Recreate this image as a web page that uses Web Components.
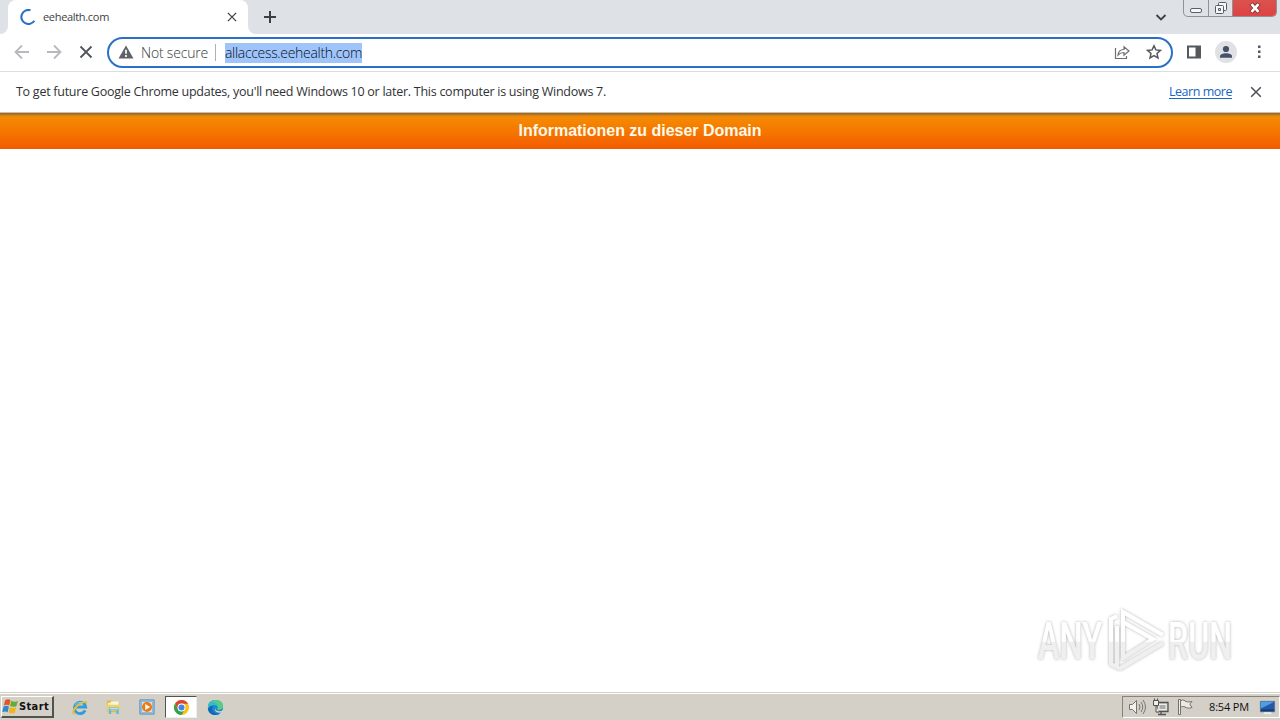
<!DOCTYPE html>
<html lang="en">
<head>
<meta charset="utf-8">
<title>eehealth.com</title>
<style>
  body { margin: 0; width: 1280px; height: 720px; overflow: hidden; background: white; font-family: "Open Sans", "Noto Sans", sans-serif; }
</style>
</head>
<body>
<desktop-screen></desktop-screen>
<script>
// Text with tracking adjusted so it takes up exactly the given width
class FitText extends HTMLElement {
  constructor() {
    super();
    this.attachShadow({ mode: 'open' });
    this.shadowRoot.innerHTML = `
      <style>
        :host { display: block; flex: none; white-space: nowrap; }
        span { display: inline-block; text-decoration: inherit; text-underline-offset: inherit; }
      </style>
      <span><slot></slot></span>
    `;
  }

  connectedCallback() {
    const width = Number(this.getAttribute('width'));
    const span = this.shadowRoot.querySelector('span');
    this.style.width = `${width}px`;
    const length = this.textContent.length;
    span.style.letterSpacing = `${(width - span.getBoundingClientRect().width) / length}px`;
  }
}
customElements.define('fit-text', FitText);

class UiIcon extends HTMLElement {
  static shapes = {
    spinner: ['0 0 16 16', '<path d="M10.500 1.300A7 7 0 1 0 14.300 11.700" fill="none" stroke="#2a6fc9" stroke-width="2.100"/>'],
    close: ['0 0 16 16', '<path d="M2.500 2.500l11 11M13.500 2.500l-11 11" fill="none" stroke="currentColor" stroke-width="1.800"/>'],
    plus: ['0 0 16 16', '<path d="M8 2v12M2 8h12" fill="none" stroke="currentColor" stroke-width="2"/>'],
    chevron: ['0 0 16 16', '<path d="M3.500 6L8 10.500 12.500 6" fill="none" stroke="currentColor" stroke-width="1.800"/>'],
    back: ['0 0 16 16', '<path d="M15 8H2M8 1.500L1.500 8 8 14.500" fill="none" stroke="currentColor" stroke-width="1.800"/>'],
    forward: ['0 0 16 16', '<path d="M1 8h13M8 1.500L14.500 8 8 14.500" fill="none" stroke="currentColor" stroke-width="1.800"/>'],
    warning: ['0 0 16 16', '<path d="M8 1.500L15.500 14.500H.5z" fill="#5f6368"/><path d="M8 5.800v4M8 11v2" stroke="white" stroke-width="1.700"/>'],
    share: ['0 0 16 16', '<path d="M1.500 4v10.500h11V12M4 11c.4-3.700 2.600-5.500 6-5.500V2.700L15 7l-5 4.300V8.500C7.300 8.500 5.600 9.200 4 11z" fill="none" stroke="#6b6f73" stroke-width="1.200"/>'],
    star: ['0 0 16 16', '<path d="M8 1.800l1.900 4.100 4.500.5-3.400 3 1 4.500L8 11.600l-4 2.300 1-4.500-3.400-3 4.500-.5z" fill="none" stroke="#55595e" stroke-width="1.500"/>'],
    panel: ['0 0 16 16', '<path d="M2 2.500h12v11H2z" fill="none" stroke="#55595e" stroke-width="2"/><path d="M9.500 2H14v12H9.500z" fill="#55595e"/>'],
    avatar: ['0 0 22 22', '<circle cx="11" cy="11" r="11" fill="#dfe1e5"/><circle cx="11" cy="8" r="3.100" fill="#435069"/><path d="M5 16.800v-1.600c0-4 12-4 12 0v1.600z" fill="#435069"/>'],
    menu: ['0 0 16 16', '<path d="M7 1.500h2.500V4H7zM7 6.500h2.500V9H7zM7 11.500h2.500V14H7z" fill="#55595e"/>'],
    minimize: ['0 0 16 16', '<rect x="2.500" y="8.500" width="11" height="4" rx="1.500" fill="#f6f7f8" stroke="#5b6068"/>'],
    restore: ['0 0 16 16', '<rect x="5.500" y="2.500" width="8" height="8" rx="1" fill="#f6f7f8" stroke="#555c66"/><rect x="2.500" y="5.500" width="8" height="8" rx="1" fill="#f6f7f8" stroke="#555c66"/><path d="M5.500 8.500h2v2h-2z" fill="#dee1e6" stroke="#555c66"/>'],
    shut: ['0 0 16 16', '<path d="M3.500 3l9 10M12.500 3l-9 10" stroke="#7f3033" stroke-width="5"/><path d="M4 3.500l8 9M12 3.500l-8 9" stroke="white" stroke-width="3"/>'],
    windows: ['0 0 16 16', '<path d="M3 2q3-1.700 5 .2L6.800 7.100q-2-1.500-5-.2z" fill="#e65422"/><path d="M8.700 2.700q2.700 1.600 6.300.2l-1.500 4.800q-3.300 1.200-5.900-.2z" fill="#65ad32"/><path d="M1.500 8q3-1.300 5 .2l-1.200 5.200q-2-1.500-5-.2z" fill="#2988d0"/><path d="M7.400 8.600q2.600 1.400 5.800.3L12 14q-3.100 1-5.700-.3z" fill="#f2b511"/>'],
    ie: ['0 0 18 18', '<path d="M15 12a6 6 0 1 1 .5-3.500H5" fill="none" stroke="#319bdc" stroke-width="3"/><path d="M2 16C-1 13 6 3 15 2c3 0 2.300 2.500 1 4.500.7-2.500-.5-3-3-2C7.500 6.800 3 12 3.500 14.500c.2 1.500 2 1 3.500 0-2 2-4 2.500-5 1.500z" fill="#e9bd32"/><path d="M4.500 6.500c2-3 5-3.500 7.500-2.500" fill="none" stroke="#8ed2f6"/>'],
    folder: ['0 0 18 18', '<path d="M2 3l1-1.500h5L9 3h6v11H2z" fill="#dfb849"/><path d="M3 4h11v8H3z" fill="#fff0a8"/><path d="M6 2.500h8.500v4H6z" fill="#f9f7d3"/><path d="M2 6h14l-1 10h-3v-4H6v4H3z" fill="#edd36f"/><path d="M4 9h10.500v7H12v-4H6.500v4H4z" fill="#66b6de"/><path d="M5 9.500h9V11H5z" fill="#b4e2f3"/>'],
    player: ['0 0 18 18', '<path d="M1 1h16v16H1z" fill="#a1c9e8" stroke="#4d88b7"/><path d="M3 3h12v12H3z" fill="#e5f1f8" stroke="#81afd2"/><circle cx="9" cy="9" r="5.700" fill="#f07914"/><path d="M7 5.500v7L12.500 9z" fill="white"/>'],
    chrome: ['0 0 18 18', '<circle cx="9" cy="9" r="8" fill="#fbc116"/><path d="M2.100 5A8 8 0 0 1 16 5H9a4 4 0 0 0-3.500 6z" fill="#dd4337"/><path d="M2.100 5A8 8 0 0 0 9 17l3.500-6A4 4 0 0 1 5.500 11z" fill="#30a254"/><circle cx="9" cy="9" r="4.200" fill="white"/><circle cx="9" cy="9" r="3.200" fill="#4285e8"/>'],
    edge: ['0 0 18 18', '<circle cx="9" cy="9" r="8" fill="#1689ce"/><path d="M1 8C1-1 17-1 17 7.500c0 4-4.500 4.500-6.200 3.300 1.600-2 .5-4.300-2.500-4.300C4.500 6.500 1 9 1 12z" fill="#36bbc5"/><path d="M9 1c5 0 8 3 8 6.500 0 4-4.500 4.500-6.200 3.300 2-2.700 0-7.300-5.800-7.800Q7 1 9 1z" fill="#58cb87"/><path d="M6.500 7c-3 5 1 10 7.500 8.200C9 19 1 16.500 1 10q2-3 5.500-3z" fill="#1466b6"/><path d="M9 8.500c-1.500 3 2 5.500 7 4l2-1v4l-3-1.200c-5 1.300-8-2.300-6-5.800z" fill="#d4d0c8"/>'],
    volume: ['0 0 18 18', '<path d="M1.500 6.500h3l4-4v13l-4-4h-3z" fill="#f2f1ee" stroke="#74736f"/><path d="M11 6q2 3 0 6M13 4q3.500 5 0 10M15 2q5 7 0 14" fill="none" stroke="#777570"/>'],
    network: ['0 0 18 18', '<path d="M5 4.500h11v9H5zM9 14v2M6 16.500h8" fill="#d0d0cc" stroke="#55534f" stroke-width="1.300"/><path d="M7 6.500h7v5H7z" fill="#aaa" stroke="#eee"/><path d="M1.500 2.500h5v5h-5zM2.500.5v2M5.500.5v2M4 8v6h3" fill="#f0eeea" stroke="#55534f"/>'],
    flag: ['0 0 18 18', '<path d="M2.500 1.500v15h2v-15z" fill="#eee" stroke="#74716d"/><path d="M4.500 2.500c3-1 4 0 5.500 1 2 .8 4 .3 6 0-1 1-2 2-2 3l2 3c-2.500 1-5 .8-7-.5-1.500-.8-3-.5-4.500 0z" fill="#edeae5" stroke="#74716d"/>'],
    desktop: ['0 0 18 16', '<path d="M1.500 1.500h15v11h-15z" fill="#2459a9" stroke="#557495"/><path d="M2 2h14L2 9z" fill="#4f9de5"/><path d="M2 10h14v2H2z" fill="#183a70"/><path d="M5 14h8" stroke="#ededeb" stroke-width="2"/>']
  };

  constructor() {
    super();
    this.attachShadow({ mode: 'open' });
  }

  connectedCallback() {
    const [viewBox, shape] = UiIcon.shapes[this.getAttribute('name')];
    const size = this.getAttribute('size') ?? 16;
    this.shadowRoot.innerHTML = `
      <style>
        :host { display: block; flex: none; width: ${size}px; height: ${size}px; }
        svg { display: block; }
      </style>
      <svg width="${size}" height="${size}" viewBox="${viewBox}">${shape}</svg>
    `;
  }
}
customElements.define('ui-icon', UiIcon);

class BrowserTabs extends HTMLElement {
  constructor() {
    super();
    this.attachShadow({ mode: 'open' });
    this.shadowRoot.innerHTML = `
      <style>
        :host { display: flex; height: 34px; background: #dee1e6; color: #3c4043; }
        .edge { width: 8px; background: white; }
        .edge::before { content: ""; display: block; height: 34px; background: #dee1e6; border-radius: 0 0 8px 0; }
        .edge.right::before { border-radius: 0 0 0 8px; }
        .tab { box-sizing: border-box; width: 240px; display: flex; align-items: center; padding: 0 10px 0 12px; background: white; border-radius: 8px 8px 0 0; }
        .tab fit-text { margin-left: 7px; font-size: 11px; line-height: 20px; }
        .tab .close { margin-left: auto; color: #43474b; }
        .plus { margin: 9px 0 0 6px; }
        .chevron { margin: 9px 14px 0 auto; }
        .controls { display: flex; height: 17px; box-sizing: border-box; width: 94px; border: 1px solid #8e9299; border-top: 0; border-radius: 0 0 5px 5px; margin-right: 3px; overflow: hidden; }
        .controls div { display: flex; justify-content: center; align-items: center; border-right: 1px solid #8e9299; width: 24px; }
        .controls .shut { width: 43px; background: linear-gradient(#d9534f, #df4242); border-right: 0; }
      </style>
      <div class="edge"></div>
      <div class="tab"><ui-icon name="spinner"></ui-icon><fit-text width="66">eehealth.com</fit-text><ui-icon class="close" name="close" size="12"></ui-icon></div>
      <div class="edge right"></div>
      <ui-icon class="plus" name="plus"></ui-icon>
      <ui-icon class="chevron" name="chevron"></ui-icon>
      <div class="controls">
        <div><ui-icon name="minimize"></ui-icon></div><div><ui-icon name="restore"></ui-icon></div><div class="shut"><ui-icon name="shut" size="14"></ui-icon></div>
      </div>
    `;
  }
}
customElements.define('browser-tabs', BrowserTabs);

class BrowserToolbar extends HTMLElement {
  constructor() {
    super();
    this.attachShadow({ mode: 'open' });
    this.shadowRoot.innerHTML = `
      <style>
        :host { display: flex; box-sizing: border-box; height: 38px; align-items: center; padding: 0 14px; border-bottom: 1px solid #dcdde0; background: white; }
        .navigation { display: flex; gap: 16px; color: #b7b9bc; width: 93px; margin-top: -1px; }
        .navigation ui-icon:last-child { color: #505459; }
        .address { box-sizing: border-box; display: flex; align-items: center; width: 1066px; height: 31px; border: 2px solid #2a6fc9; border-radius: 16px; padding: 0 9px; font-size: 14px; font-weight: 300; line-height: 20px; }
        .address > ui-icon, .actions ui-icon { margin-top: -1px; }
        .security { margin-left: 7px; color: #35393d; }
        .divider { width: 1px; height: 17px; background: #aeb1b5; margin: 0 9px 0 7px; }
        .url { background: #9fc4fa; color: #07111f; }
        .actions { display: flex; gap: 16px; margin-left: auto; }
        .tools { display: flex; align-items: center; margin: -1px -1px 0 auto; }
        .avatar { margin: 0 14px 0 13px; }
      </style>
      <div class="navigation"><ui-icon name="back"></ui-icon><ui-icon name="forward"></ui-icon><ui-icon name="close"></ui-icon></div>
      <div class="address">
        <ui-icon name="warning"></ui-icon><fit-text class="security" width="67">Not secure</fit-text><span class="divider"></span><fit-text class="url" width="137">allaccess.eehealth.com</fit-text>
        <div class="actions"><ui-icon name="share"></ui-icon><ui-icon name="star"></ui-icon></div>
      </div>
      <div class="tools"><ui-icon name="panel"></ui-icon><ui-icon class="avatar" name="avatar" size="22"></ui-icon><ui-icon name="menu"></ui-icon></div>
    `;
  }
}
customElements.define('browser-toolbar', BrowserToolbar);

class UpdateNotice extends HTMLElement {
  constructor() {
    super();
    this.attachShadow({ mode: 'open' });
    this.shadowRoot.innerHTML = `
      <style>
        :host { display: flex; height: 40px; align-items: center; padding: 0 17px 0 16px; color: #303235; font-size: 12.5px; line-height: 20px; background: white; }
        .link { margin-left: auto; color: #1765c5; text-decoration: underline; text-underline-offset: 2px; }
        ui-icon { margin-left: 17px; color: #505459; }
      </style>
      <fit-text width="590">To get future Google Chrome updates, you'll need Windows 10 or later. This computer is using Windows 7.</fit-text>
      <fit-text class="link" width="63">Learn more</fit-text>
      <ui-icon name="close" size="14"></ui-icon>
    `;
  }
}
customElements.define('update-notice', UpdateNotice);

class DomainPage extends HTMLElement {
  constructor() {
    super();
    this.attachShadow({ mode: 'open' });
    this.shadowRoot.innerHTML = `
      <style>
        :host { display: block; position: relative; background: white; }
        header { box-sizing: border-box; height: 37px; border-top: 1px solid #d7bd91; background: linear-gradient(#936c36 0 1px, #ca7f1d 2px, #f38a07 4px, #f58600 8px, #f56300 31px, #ed5b05); color: #fff9e8; display: flex; justify-content: center; font: bold 16px/36px "Liberation Sans", sans-serif; }
        .mark { position: absolute; right: 20px; bottom: 12px; }
      </style>
      <header><fit-text width="243">Informationen zu dieser Domain</fit-text></header>
      <svg class="mark" width="240" height="80" viewBox="1020 600 240 80">
        <defs>
          <linearGradient id="fade" x1="0" y1="610" x2="0" y2="670" gradientUnits="userSpaceOnUse"><stop offset=".52" stop-color="#fff"/><stop offset=".54" stop-color="#efefef"/><stop offset="1" stop-color="#f0f0f0"/></linearGradient>
          <filter id="shade" x="-10%" y="-10%" width="120%" height="120%"><feDropShadow dx="0" dy="0" stdDeviation="1.4" flood-color="#777" flood-opacity=".6"/></filter>
        </defs>
        <g filter="url(#shade)" fill="url(#fade)" font-family="Roboto, sans-serif" font-size="51" font-weight="500">
          <text x="1038" y="659" textLength="64" lengthAdjust="spacingAndGlyphs">ANY</text>
          <text x="1168" y="659" textLength="64" lengthAdjust="spacingAndGlyphs">RUN</text>
          <path d="M1117 616l-6 3v45l6 3v-41M1123 660v-48l40 23M1123 622l30 17-30 19M1119 669l44-26" fill="none" stroke="url(#fade)" stroke-width="4"/>
        </g>
      </svg>
    `;
  }
}
customElements.define('domain-page', DomainPage);

class TaskBar extends HTMLElement {
  constructor() {
    super();
    this.attachShadow({ mode: 'open' });
    this.shadowRoot.innerHTML = `
      <style>
        :host { display: flex; box-sizing: border-box; height: 28px; padding-top: 4px; background: linear-gradient(#d4d0c8 0 1px, white 1px 2px, #d4d0c8 2px); color: #111; }
        .start { box-sizing: border-box; display: flex; align-items: center; width: 53px; height: 22px; margin-left: 1px; border: 1px solid white; border-right: 2px solid #55524d; border-bottom: 2px solid #55524d; font: bold 11px/18px "DejaVu Sans Condensed", "DejaVu Sans", sans-serif; }
        .apps { display: flex; align-items: center; height: 22px; margin-left: 8px; }
        .app { display: flex; align-items: center; justify-content: center; width: 34px; height: 22px; }
        .active { box-sizing: border-box; width: 32px; margin: 0 1px; background: white; border: 1px solid #55524d; border-right-color: #eee; border-bottom-color: #eee; }
        .tray { box-sizing: border-box; display: flex; align-items: center; width: 158px; height: 22px; margin: 0 0 0 auto; padding: 0 3px 0 5px; border: 1px solid #87837c; border-right-color: white; border-bottom-color: white; }
        .tray ui-icon + ui-icon { margin-left: 6px; }
        .clock { margin-left: 15px; font-size: 11px; line-height: 18px; }
        .tray .desktop { margin-left: auto; }
      </style>
      <div class="start"><ui-icon name="windows" size="17"></ui-icon><fit-text width="30">Start</fit-text></div>
      <div class="apps">
        <div class="app"><ui-icon name="ie" size="17"></ui-icon></div>
        <div class="app"><ui-icon name="folder" size="17"></ui-icon></div>
        <div class="app"><ui-icon name="player" size="16"></ui-icon></div>
        <div class="app active"><ui-icon name="chrome" size="17"></ui-icon></div>
        <div class="app"><ui-icon name="edge" size="17"></ui-icon></div>
      </div>
      <div class="tray"><ui-icon name="volume" size="18"></ui-icon><ui-icon name="network" size="18"></ui-icon><ui-icon name="flag" size="18"></ui-icon><fit-text class="clock" width="40">8:54 PM</fit-text><ui-icon class="desktop" name="desktop" size="17"></ui-icon></div>
    `;
  }
}
customElements.define('task-bar', TaskBar);

class DesktopScreen extends HTMLElement {
  constructor() {
    super();
    this.attachShadow({ mode: 'open' });
    this.shadowRoot.innerHTML = `
      <style>
        :host { display: grid; grid-template-rows: 34px 38px 40px 1fr 28px; width: 1280px; height: 720px; overflow: hidden; }
      </style>
      <browser-tabs></browser-tabs>
      <browser-toolbar></browser-toolbar>
      <update-notice></update-notice>
      <domain-page></domain-page>
      <task-bar></task-bar>
    `;
  }
}
customElements.define('desktop-screen', DesktopScreen);
</script>
</body>
</html>
